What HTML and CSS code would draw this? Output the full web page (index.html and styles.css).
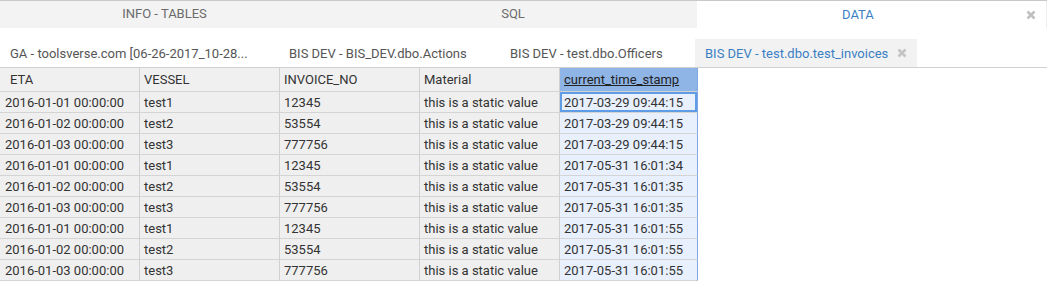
FILE: index.html
```html
<!DOCTYPE html>
<html>
<head>
<meta charset="utf-8">
<link rel="stylesheet" href="styles.css">
</head>
<body>
<div class="topbar">
  <div class="ttab"><span class="ttab-label">INFO - TABLES</span></div>
  <div class="ttab"><span class="ttab-label">SQL</span></div>
  <div class="ttab active"><span class="ttab-label">DATA</span>
    <svg class="xicon big" viewBox="0 0 10 10"><path d="M1.5 1.5 L8.5 8.5 M8.5 1.5 L1.5 8.5"/></svg>
  </div>
</div>
<div class="subbar">
  <div class="stab first"><span class="stab-label trunc">GA - toolsverse.com [06-26-2017_10-28...</span></div>
  <div class="stab second"><span class="stab-label">BIS DEV - BIS_DEV.dbo.Actions</span></div>
  <div class="stab third"><span class="stab-label">BIS DEV - test.dbo.Officers</span></div>
  <div class="stab active"><span class="stab-label">BIS DEV - test.dbo.test_invoices</span>
    <svg class="xicon" viewBox="0 0 10 10"><path d="M1.5 1.5 L8.5 8.5 M8.5 1.5 L1.5 8.5"/></svg>
  </div>
</div>
<div class="gridwrap">
<table class="grid">
  <thead>
    <tr><th class="c-eta">ETA</th><th>VESSEL</th><th>INVOICE_NO</th><th>Material</th><th class="sel-col"><u>current_time_stamp</u></th></tr>
  </thead>
  <tbody>
    <tr><td>2016-01-01 00:00:00</td><td>test1</td><td>12345</td><td>this is a static value</td><td class="sel-col sel-cell">2017-03-29 09:44:15</td></tr>
    <tr><td>2016-01-02 00:00:00</td><td>test2</td><td>53554</td><td>this is a static value</td><td class="sel-col">2017-03-29 09:44:15</td></tr>
    <tr><td>2016-01-03 00:00:00</td><td>test3</td><td>777756</td><td>this is a static value</td><td class="sel-col">2017-03-29 09:44:15</td></tr>
    <tr><td>2016-01-01 00:00:00</td><td>test1</td><td>12345</td><td>this is a static value</td><td class="sel-col">2017-05-31 16:01:34</td></tr>
    <tr><td>2016-01-02 00:00:00</td><td>test2</td><td>53554</td><td>this is a static value</td><td class="sel-col">2017-05-31 16:01:35</td></tr>
    <tr><td>2016-01-03 00:00:00</td><td>test3</td><td>777756</td><td>this is a static value</td><td class="sel-col">2017-05-31 16:01:35</td></tr>
    <tr><td>2016-01-01 00:00:00</td><td>test1</td><td>12345</td><td>this is a static value</td><td class="sel-col">2017-05-31 16:01:55</td></tr>
    <tr><td>2016-01-02 00:00:00</td><td>test2</td><td>53554</td><td>this is a static value</td><td class="sel-col">2017-05-31 16:01:55</td></tr>
    <tr><td>2016-01-03 00:00:00</td><td>test3</td><td>777756</td><td>this is a static value</td><td class="sel-col">2017-05-31 16:01:55</td></tr>
  </tbody>
</table>
</div>
</body>
</html>
```
FILE: styles.css
```css
html, body {
  margin: 0;
  padding: 0;
  background: #ffffff;
  font-family: Roboto, "Liberation Sans", sans-serif;
}
.topbar {
  display: flex;
  border-top: 1px solid #c9c9c9;
  height: 27px;
}
.ttab {
  flex: 0 0 349px;
  box-sizing: border-box;
  padding-right: 20px;
  padding-bottom: 2px;
  background: #f3f3f3;
  color: #6b6b6b;
  font-size: 13px;
  display: flex;
  align-items: center;
  justify-content: center;
}
.ttab:nth-child(2) { flex-basis: 348px; }
.ttab.active {
  flex: 1 1 auto;
  background: #ffffff;
  color: #3a7fc4;
  justify-content: space-between;
  padding-left: 145px;
  padding-right: 10px;
  padding-bottom: 0;
  border-right: 1px solid #eeeeee;
}
.xicon {
  width: 10px;
  height: 10px;
  fill: none;
  stroke: #c4c4c4;
  stroke-width: 2.6;
}
.xicon.big { stroke: #c0c0c0; }
.subbar {
  height: 39px;
  display: flex;
  align-items: flex-end;
}
.stab {
  height: 28px;
  display: flex;
  align-items: center;
  padding: 0 10px;
  font-size: 13px;
  color: #555555;
  box-sizing: border-box;
}
.stab.first { width: 279px; }
.stab.second { width: 221px; }
.stab.third { width: 195px; }
.stab.active {
  background: #f2f2f2;
  color: #3a7fc4;
  width: 222px;
  justify-content: space-between;
}
.stab-label { white-space: nowrap; }
.gridwrap {
  border-top: 1px solid #d0d0d0;
}
.grid {
  border-collapse: separate;
  border-spacing: 0;
  table-layout: fixed;
  width: 698px;
  font-size: 13px;
  color: #333333;
}
.grid th, .grid td {
  box-sizing: border-box;
  width: 140px;
  padding: 0 0 0 4px;
  text-align: left;
  font-weight: normal;
  white-space: nowrap;
  overflow: hidden;
  border-right: 1px solid #d0d0d0;
  border-bottom: 1px solid #d4d4d4;
  background: #efefef;
}
.grid th {
  height: 24px;
  background: #f0f0f0;
}
.grid td {
  height: 21px;
}
.grid th:first-child, .grid td:first-child { padding-left: 5px; }
.grid th.c-eta { padding-left: 10px; }
.grid th.sel-col {
  background: #8fb4e6;
  color: #222;
}
.grid th.sel-col, .grid td.sel-col {
  width: 138px;
  border-right: 1px solid #7ea8e4;
}
.grid td.sel-col {
  background: #e8f0fd;
}
.grid td.sel-cell {
  box-shadow: inset 0 0 0 2px #5e9ce6;
}
```
